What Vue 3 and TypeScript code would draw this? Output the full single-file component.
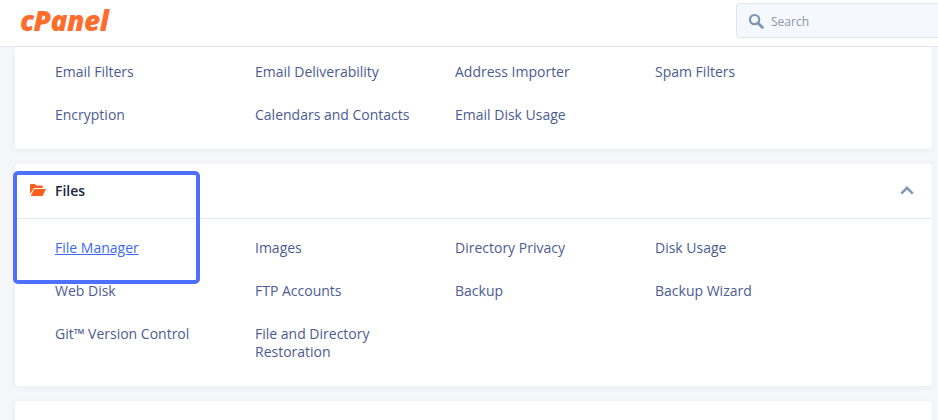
<script setup lang="ts">
const top: string[] = ['Email Filters','Email Deliverability','Address Importer','Spam Filters','Encryption','Calendars and Contacts','Email Disk Usage']
const files: string[] = ['File Manager','Images','Directory Privacy','Disk Usage','Web Disk','FTP Accounts','Backup','Backup Wizard','Git™ Version Control','File and Directory Restoration']
</script>

<template>
  <div class="page">
    <header class="topbar">
      <span class="logo">cPanel</span>
      <div class="search">
        <svg class="search-icon" viewBox="0 0 16 16" width="16" height="16" aria-hidden="true">
          <circle cx="6.6" cy="6.6" r="4.6" fill="none" stroke="#7c97b2" stroke-width="2.2" />
          <path d="M10 10l4.4 4.4" stroke="#7c97b2" stroke-width="2.8" stroke-linecap="round" />
        </svg>
        <span class="search-text">Search</span>
      </div>
    </header>
    <main class="content">
      <section class="card first">
        <ul class="grid">
          <li v-for="item in top" :key="item"><a>{{ item }}</a></li>
        </ul>
      </section>
      <section class="card files">
        <div class="card-head">
          <svg class="folder" viewBox="0 0 16 12" width="16" height="12" aria-hidden="true">
            <path d="M0 1.2C0 .5.5 0 1.2 0h3.6l1.5 1.5h5.2c.7 0 1.2.5 1.2 1.2V4H4L0 10z" fill="#fb5f1c" />
            <path d="M4.3 5H16l-3 6.3c-.1.4-.5.7-1 .7H.6z" fill="#fb5f1c" />
          </svg>
          <h2>Files</h2>
          <svg class="chevron" viewBox="0 0 14 9" width="14" height="9" aria-hidden="true">
            <path d="M1.3 7.6L7 1.9l5.7 5.7" fill="none" stroke="#7f9ab8" stroke-width="2.6" />
          </svg>
        </div>
        <ul class="grid body">
          <li v-for="(item, i) in files" :key="item"><a :class="{ active: i === 0 }">{{ item }}</a></li>
        </ul>
      </section>
      <section class="card last"></section>
    </main>
    <div class="highlight"></div>
  </div>
</template>

<style>
html, body { margin: 0; overflow: hidden; }
</style>

<style scoped>
.page {
  position: relative;
  width: 938px;
  height: 420px;
  overflow: hidden;
  background: #f5f6f9;
  font-family: "Open Sans", "Liberation Sans", sans-serif;
  font-size: 14px;
  line-height: 18px;
  color: #4c5c92;
}
.topbar {
  height: 46px;
  background: #fff;
  border-bottom: 1px solid #e3e8f0;
  display: flex;
  align-items: center;
  justify-content: space-between;
  padding-left: 20px;
}
.logo {
  font-family: "Open Sans", sans-serif;
  font-weight: 800;
  font-style: italic;
  font-size: 28px;
  line-height: 28px;
  letter-spacing: -0.5px;
  color: #ff6c2c;
  margin-top: -6px;
}
.search {
  width: 190px;
  height: 33px;
  margin-top: -5px;
  background: #f5f8fc;
  border: 1px solid #e0e6ef;
  border-right: none;
  border-radius: 4px 0 0 4px;
  display: flex;
  align-items: center;
  padding-left: 11px;
  gap: 7px;
}
.search-text { font-size: 12px; color: #8c95a8; margin-top: 2px; }
.content {
  display: flex;
  flex-direction: column;
  gap: 15px;
  padding: 0 6px 0 15px;
}
.card {
  background: #fff;
  border-radius: 0 0 4px 4px;
  box-shadow: 0 1px 6px rgba(40, 50, 90, 0.05);
}
.files, .last { border-radius: 4px; }
.last { height: 60px; }
.grid {
  list-style: none;
  margin: 0;
  padding: 16px 0 25px 40px;
  display: grid;
  grid-template-columns: repeat(4, 200px);
  row-gap: 25px;
}
.grid li { padding-right: 20px; }
.body { padding-top: 20px; }
.card-head {
  height: 53px;
  border-bottom: 1px solid #e3e8f0;
  display: flex;
  align-items: center;
  padding: 0 18px 1px 15px;
}
.folder { margin-right: 9px; margin-top: -2px; }
h2 {
  margin: 0;
  flex: 1;
  font-size: 14px;
  line-height: 18px;
  font-weight: 600;
  color: #1c2440;
}
.chevron { margin-top: -1px; }
.active {
  color: #3d6bee;
  text-decoration: underline;
}
.highlight {
  position: absolute;
  left: 13px;
  top: 171px;
  width: 179px;
  height: 105px;
  border: 4px solid #4f70fb;
  border-radius: 5px;
}
</style>
